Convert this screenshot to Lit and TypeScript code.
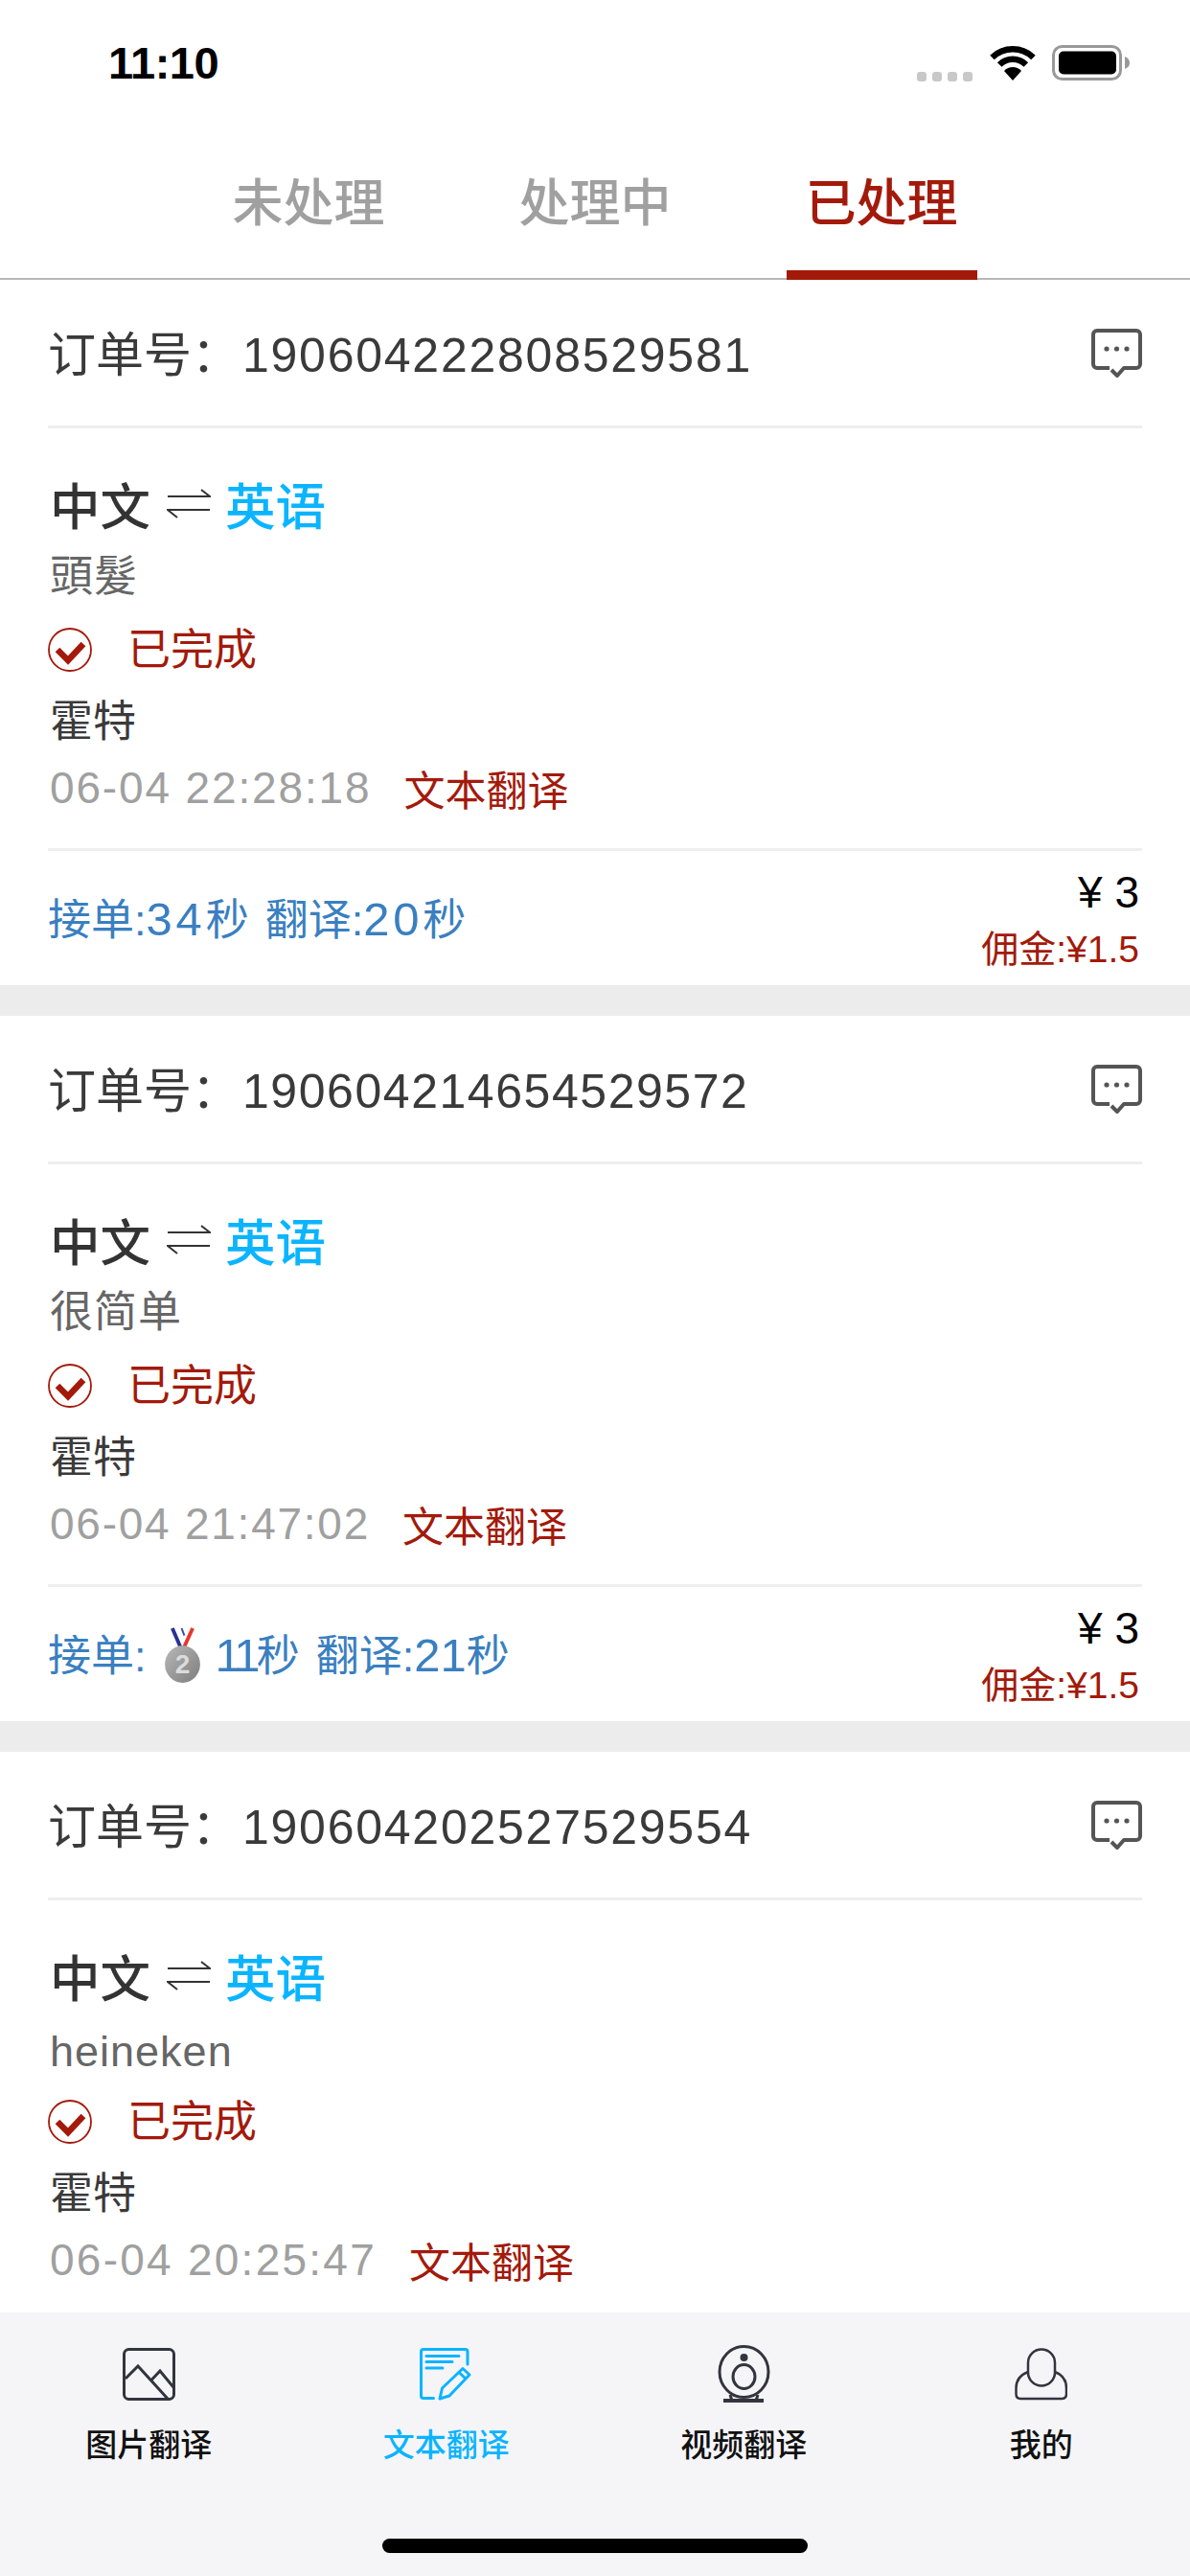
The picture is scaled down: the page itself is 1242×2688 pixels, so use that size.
import { LitElement, html, css, svg } from "lit";
import { customElement } from "lit/decorators.js";

const medal = html`<svg class="medal" viewBox="0 0 40 60" aria-hidden="true">
  <defs><linearGradient id="mg" x1="0" y1="0" x2="1" y2="1"><stop offset="0" stop-color="#b8b8b8"/><stop offset="1" stop-color="#7d7d7d"/></linearGradient></defs>
  <path d="M9 1 L18 22" stroke="#2a3192" stroke-width="4" fill="none"/>
  <path d="M16 1 L21 14" stroke="#fff" stroke-width="3" fill="none"/>
  <path d="M19 1 L22 9" stroke="#3d47b5" stroke-width="2" fill="none"/>
  <path d="M31 1 L21 23" stroke="#e8352c" stroke-width="4" fill="none"/>
  <ellipse cx="20" cy="40" rx="19" ry="20" fill="url(#mg)"/>
  <text x="20" y="50" text-anchor="middle" class="medal-num">2</text>
</svg>`;

const chat = html`<svg class="chat" viewBox="0 0 53 51" aria-hidden="true">
  <path d="M19 41 H6 a4 4 0 0 1 -4 -4 V6 a4 4 0 0 1 4 -4 H47 a4 4 0 0 1 4 4 V37 a4 4 0 0 1 -4 4 H34 L27 49 L21 43" fill="none" stroke="#555" stroke-width="4" stroke-linejoin="round"/>
  <circle cx="16" cy="21" r="2.6" fill="#555"/><circle cx="26.5" cy="21" r="2.6" fill="#555"/><circle cx="37" cy="21" r="2.6" fill="#555"/>
</svg>`;

const swap = html`<svg class="swap" viewBox="0 0 46 32" aria-hidden="true">
  <path d="M1 9 H45 L36 2 M45 23 H1 L11 31" fill="none" stroke="#333" stroke-width="2"/>
</svg>`;

const check = html`<svg class="check" viewBox="0 0 46 46" aria-hidden="true">
  <circle cx="23" cy="23" r="22" fill="none" stroke="#a31a0b" stroke-width="1.8"/>
  <path d="M10 23 L21 34 L37 17" fill="none" stroke="#a31a0b" stroke-width="6.5"/>
</svg>`;

const navIcons = {
  image: svg`<rect x="1.5" y="1.5" width="52" height="52" rx="5" fill="none" stroke="currentColor" stroke-width="3"/>
    <path d="M3 32 L16 19 L47 53 M30.5 33 L39 24 L53 41" fill="none" stroke="currentColor" stroke-width="3"/>`,
  doc: svg`<path d="M50 17 V4 Q50 1.5 47.5 1.5 H4 Q1.5 1.5 1.5 4 V50 Q1.5 52.5 4 52.5 H14.5" fill="none" stroke="currentColor" stroke-width="3" stroke-linecap="round"/>
    <path d="M7 8.5 H41 M7 14.5 H34 M7 21 H24" stroke="currentColor" stroke-width="3" stroke-linecap="round" fill="none"/>
    <path d="M21 53 L23.5 42 L45 21.5 L52 28 L31 50 Z M41 25.5 L48 32" fill="none" stroke="currentColor" stroke-width="3" stroke-linejoin="round"/>`,
  cam: svg`<ellipse cx="27.5" cy="28" rx="25.5" ry="26.5" fill="none" stroke="currentColor" stroke-width="3"/>
    <ellipse cx="27.5" cy="33" rx="11.5" ry="12.5" fill="none" stroke="currentColor" stroke-width="3"/>
    <circle cx="27.5" cy="13" r="4" fill="currentColor"/>
    <path d="M6 58 H48" stroke="currentColor" stroke-width="4" fill="none"/>
    <path d="M13 52 L15 58 M42 52 L40 58" stroke="currentColor" stroke-width="3" fill="none"/>`,
  person: svg`<rect x="14" y="1.5" width="28" height="38" rx="14" fill="none" stroke="currentColor" stroke-width="2.5"/>
    <path d="M14 25 C6 28 1.5 34 1.5 42 V48 Q1.5 53 6 53 H49 Q54 53 54 48 V42 C54 34 50 28 42 25" fill="none" stroke="currentColor" stroke-width="2.5"/>`,
};

const num = (v: string) => {
  const ones = [...v].filter(c => c === "1").length;
  return html`<span class="n" style="letter-spacing:${3.8 - ones * 3.8}px">${v}</span>`;
};

interface Order { no: string; noTrack: number; title: string; time: string; timeTrack: number; accept?: string; translate?: string; hasMedal?: boolean; }
const orders: Order[] = [
  { no: "190604222808529581", noTrack: 1.75, title: "頭髮", time: "06-04 22:28:18", timeTrack: 1.85, accept: "34", translate: "20" },
  { no: "190604214654529572", noTrack: 1.55, title: "很简单", time: "06-04 21:47:02", timeTrack: 1.75, accept: "11", translate: "21", hasMedal: true },
  { no: "190604202527529554", noTrack: 1.75, title: "heineken", time: "06-04 20:25:47", timeTrack: 2.25 },
];

const nav = [
  { label: "图片翻译", icon: "image", vb: "0 0 55 55", cls: "" },
  { label: "文本翻译", icon: "doc", vb: "0 0 55 55", cls: "active" },
  { label: "视频翻译", icon: "cam", vb: "0 0 55 60", cls: "" },
  { label: "我的", icon: "person", vb: "0 0 55 55", cls: "" },
] as const;

@customElement("app-root")
export class AppRoot extends LitElement {
  static styles = css`
    :host { display: block; width: 1242px; height: 2688px; background: #fff; overflow: hidden;
      font-family: "Liberation Sans", "Noto Sans CJK SC", sans-serif; color: #333; }
    .page { display: flex; flex-direction: column; height: 2688px; }
    .status { flex: none; height: 132px; display: flex; align-items: flex-start; padding: 0 63px 0 113px; justify-content: space-between; box-sizing: border-box; }
    .time { font-size: 47px; font-weight: 700; color: #000; line-height: 54px; margin-top: 39px; letter-spacing: -0.5px; }
    .sys { display: flex; align-items: flex-start; margin-top: 47px; }
    .dots { display: flex; gap: 6px; margin-top: 28px; margin-right: 17px; }
    .dots i { width: 10px; height: 10px; border-radius: 3px; background: #c8c8c8; }
    .wifi { width: 50px; height: 37px; margin-right: 16px; }
    .bat { width: 81px; height: 37px; }

    .tabs { flex: none; height: 160px; box-sizing: border-box; border-bottom: 2px solid #b8b8b8; display: flex; justify-content: center; gap: 100px; }
    .tab { width: 199px; height: 160px; box-sizing: border-box; padding-top: 3px; text-align: center; line-height: 155px; font-size: 53px; font-weight: 500; color: #a0a0a0; }
    .tab.on { color: #a31a0b; border-bottom: 10px solid #a31a0b; line-height: 155px; }

    .list { flex: 1; min-height: 0; overflow: hidden; display: flex; flex-direction: column; gap: 32px; background: #ececec; }
    .card { flex: none; height: 736px; background: #fff; box-sizing: border-box; padding: 0 50px; display: flex; flex-direction: column; }
    .head { flex: none; height: 155px; box-sizing: border-box; border-bottom: 3px solid #eee; display: flex; align-items: center; justify-content: space-between; padding-bottom: 5px; }
    .no { font-size: 50px; color: #3a3a3a; }
    .digits { margin-left: 3px; }
    .chat { width: 53px; height: 51px; margin-top: 6px; }

    .body { flex: none; height: 441px; box-sizing: border-box; padding-top: 42px; border-bottom: 3px solid #eee; display: grid; grid-template-rows: 72px 72px 82px 68px 78px; align-items: center; padding-left: 2px; }
    .lang { display: flex; align-items: center; font-size: 52.5px; font-weight: 500; color: #333; }
    .lang b { color: #0bb4ff; font-weight: 500; }
    .swap { width: 46px; height: 32px; margin: 0 15px 0 17px; }
    .title { font-size: 45px; color: #666; letter-spacing: 1px; }
    .title.latin { margin-top: 16px; }
    .state { display: flex; align-items: center; font-size: 45px; color: #a31a0b; margin-left: -2px; }
    .check { width: 46px; height: 46px; margin: 8px 37px 0 0; }
    .author { font-size: 45px; color: #3a3a3a; }
    .when { display: flex; align-items: center; font-size: 46px; color: #a0a0a0; }
    .kind { font-size: 43px; color: #a31a0b; margin-left: 34px; letter-spacing: 0; }

    .foot { flex: 1; display: flex; justify-content: space-between; align-items: flex-start; }
    .speed { margin-top: 43px; font-size: 45px; color: #3a7fc1; display: flex; align-items: baseline; line-height: 56px; gap: 17px; white-space: nowrap; }
    .n { font-size: 49px; }
    .medal { width: 39px; height: 58px; margin: 0 15px 0 18px; vertical-align: middle; position: relative; top: -5px; }
    .medal-num { font: 700 29px "Liberation Sans", sans-serif; fill: #dcdcdc; }
    .money { text-align: right; padding-right: 3px; }
    .price { font-size: 46px; color: #000; line-height: 50px; margin-top: 18px; white-space: pre; }
    .fee { font-size: 39px; color: #a31a0b; line-height: 50px; margin-top: 10px; }

    .nav { flex: none; height: 275px; background: #f5f5f8; display: grid; grid-template-columns: repeat(4, 1fr); position: relative; }
    .item { display: flex; flex-direction: column; align-items: center; color: #34343f; }
    .icon { height: 62px; margin-top: 33px; display: flex; align-items: center; justify-content: center; }
    .icon svg { width: 55px; height: 55px; }
    .icon svg.tall { height: 60px; }
    .label { font-size: 33px; font-weight: 500; color: #111; line-height: 44px; margin-top: 22px; }
    .active, .active .label { color: #0bb4ff; }
    .home { position: absolute; left: 399px; top: 236px; width: 444px; height: 15px; border-radius: 8px; background: #000; }
  `;

  render() {
    return html`<div class="page">
      <div class="status">
        <div class="time">11:10</div>
        <div class="sys">
          <div class="dots"><i></i><i></i><i></i><i></i></div>
          <svg class="wifi" viewBox="0 0 50 37" aria-hidden="true">
            <path d="M3.5 13 A31 31 0 0 1 46.5 13" fill="none" stroke="#000" stroke-width="6.5"/>
            <path d="M11.2 20.5 A19.5 19.5 0 0 1 38.8 20.5" fill="none" stroke="#000" stroke-width="6.5"/>
            <path d="M25 37 L16 27 A12 12 0 0 1 34 27 Z" fill="#000"/>
          </svg>
          <svg class="bat" viewBox="0 0 81 37" aria-hidden="true">
            <rect x="1.5" y="1.5" width="70" height="34" rx="9" fill="none" stroke="#999" stroke-width="3"/>
            <rect x="7" y="6.5" width="60" height="24" rx="5" fill="#000"/>
            <path d="M76 12 Q81 14 81 18.5 Q81 23 76 25 Z" fill="#999"/>
          </svg>
        </div>
      </div>
      <div class="tabs">
        <div class="tab">未处理</div>
        <div class="tab">处理中</div>
        <div class="tab on">已处理</div>
      </div>
      <div class="list">
        ${orders.map(o => html`<div class="card">
          <div class="head">
            <div class="no">订单号：<span class="digits" style="letter-spacing:${o.noTrack}px">${o.no}</span></div>
            ${chat}
          </div>
          <div class="body">
            <div class="lang">中文${swap}<b>英语</b></div>
            <div class="title ${/^[a-z]/.test(o.title) ? "latin" : ""}">${o.title}</div>
            <div class="state">${check}已完成</div>
            <div class="author">霍特</div>
            <div class="when"><span style="letter-spacing:${o.timeTrack}px">${o.time}</span><span class="kind">文本翻译</span></div>
          </div>
          ${o.accept ? html`<div class="foot">
            <div class="speed"><span>接单:${o.hasMedal ? medal : ""}${num(o.accept)}秒</span><span>翻译:${num(o.translate!)}秒</span></div>
            <div class="money">
              <div class="price">¥ 3</div>
              <div class="fee">佣金:¥1.5</div>
            </div>
          </div>` : ""}
        </div>`)}
      </div>
      <div class="nav">
        ${nav.map(n => html`<div class="item ${n.cls}">
          <div class="icon"><svg class=${n.icon === "cam" ? "tall" : ""} viewBox=${n.vb} aria-hidden="true">${navIcons[n.icon]}</svg></div>
          <div class="label">${n.label}</div>
        </div>`)}
        <div class="home"></div>
      </div>
    </div>`;
  }
}
